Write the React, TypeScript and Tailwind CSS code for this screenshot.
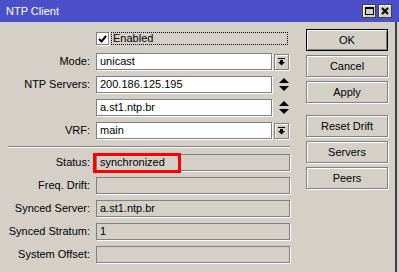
import type { ReactNode } from 'react';

function DropIcon() {
  return (
    <svg width="7" height="8" viewBox="0 0 7 8">
      <rect x="0" y="0" width="7" height="1" fill="#000" />
      <rect x="2" y="2" width="3" height="2" fill="#000" />
      <polygon points="0,4 7,4 3.5,7.5" fill="#000" />
    </svg>
  );
}

function SpinIcon() {
  return (
    <svg width="10" height="13" viewBox="0 0 10 13">
      <polygon points="0,5 10,5 5,0" fill="#000" />
      <polygon points="0,8 10,8 5,13" fill="#000" />
    </svg>
  );
}

function Row({ label, children }: { label: string; children: ReactNode }) {
  return (
    <div className="flex h-[17px] items-center gap-[6px]">
      <div className="w-[90px] text-right whitespace-nowrap">{label}</div>
      {children}
    </div>
  );
}

function Field({ value, width, disabled }: { value?: string; width: string; disabled?: boolean }) {
  return (
    <div
      className={`${width} h-[17px] border border-[#808080] shadow-[1px_1px_0_#fff] px-[3px] leading-[15px] whitespace-nowrap ${
        disabled ? 'bg-[#d4d0c8]' : 'bg-white'
      }`}
    >
      {value}
    </div>
  );
}

function Btn({ label, primary }: { label: string; primary?: boolean }) {
  return (
    <div
      className={`h-[22px] w-[82px] flex items-center justify-center ${
        primary
          ? 'border border-black shadow-[inset_1px_1px_0_#fff,inset_-1px_-1px_0_#808080]'
          : 'border border-[#808080] shadow-[1px_1px_0_#fff,inset_1px_1px_0_#fff]'
      }`}
    >
      {label}
    </div>
  );
}

export default function App() {
  return (
    <div className="w-[399px] h-[272px] bg-[#d4d0c8] flex flex-col overflow-hidden text-[11px] text-black font-['Liberation_Sans',Arial,sans-serif]">
      {/* title bar */}
      <div className="h-[22px] bg-[#4b50c8] flex items-center pl-[6px] pr-[7px]">
        <span className="text-white text-[11px]">NTP Client</span>
        <div className="ml-auto flex gap-[2px]">
          <div className="w-[14px] h-[14px] bg-[#d4d0c8] border border-[#404040] shadow-[inset_1px_1px_0_#fff] flex items-center justify-center">
            <div className="w-[9px] h-[8px] border border-black border-t-2" />
          </div>
          <div className="w-[14px] h-[14px] bg-[#d4d0c8] border border-[#404040] shadow-[inset_1px_1px_0_#fff] flex items-center justify-center">
            <svg width="8" height="8" viewBox="0 0 8 8">
              <path d="M1 1 L7 7 M7 1 L1 7" stroke="#000" strokeWidth="2" />
            </svg>
          </div>
        </div>
      </div>

      {/* body */}
      <div className="flex-1 w-[397px] border-r-2 border-[#404040] flex relative">
        <div className="w-[300px] flex flex-col pt-[10px]">
          <div className="flex h-[13px] items-center pl-[96px] gap-[2px]">
            <div className="w-[13px] h-[13px] bg-white border border-[#808080] shadow-[1px_1px_0_#fff] flex items-center justify-center">
              <svg width="9" height="8" viewBox="0 0 9 8">
                <path d="M1 4 L3.5 6.5 L8 1" stroke="#000" strokeWidth="2" fill="none" />
              </svg>
            </div>
            <div className="w-[177px] h-[13px] border border-dotted border-black leading-[11px] pl-[1px]">Enabled</div>
          </div>

          <div className="mt-[8px] flex flex-col gap-[6px]">
            <Row label="Mode:">
              <Field value="unicast" width="w-[176px]" />
              <div className="-ml-[4px] w-[15px] h-[16px] border border-[#808080] shadow-[1px_1px_0_#fff,inset_1px_1px_0_#fff] flex items-center justify-center">
                <DropIcon />
              </div>
            </Row>
            <Row label="NTP Servers:">
              <Field value="200.186.125.195" width="w-[176px]" />
              <div className="w-[11px] flex justify-center">
                <SpinIcon />
              </div>
            </Row>
            <Row label="">
              <Field value="a.st1.ntp.br" width="w-[176px]" />
              <div className="w-[11px] flex justify-center">
                <SpinIcon />
              </div>
            </Row>
            <Row label="VRF:">
              <Field value="main" width="w-[176px]" />
              <div className="-ml-[4px] w-[15px] h-[16px] border border-[#808080] shadow-[1px_1px_0_#fff,inset_1px_1px_0_#fff] flex items-center justify-center">
                <DropIcon />
              </div>
            </Row>
          </div>

          <div className="mt-[7px] ml-[8px] w-[282px] h-[2px] border-t border-[#808080] border-b border-b-white" />

          <div className="mt-[6px] flex flex-col gap-[6px]">
            <Row label="Status:">
              <Field value="synchronized" width="w-[194px]" disabled />
            </Row>
            <Row label="Freq. Drift:">
              <Field width="w-[194px]" disabled />
            </Row>
            <Row label="Synced Server:">
              <Field value="a.st1.ntp.br" width="w-[194px]" disabled />
            </Row>
            <Row label="Synced Stratum:">
              <Field value="1" width="w-[194px]" disabled />
            </Row>
            <Row label="System Offset:">
              <Field width="w-[194px]" disabled />
            </Row>
          </div>
        </div>

        <div className="ml-[6px] pt-[7px] flex flex-col gap-[4px]">
          <Btn label="OK" primary />
          <Btn label="Cancel" />
          <Btn label="Apply" />
          <div className="h-[4px]" />
          <Btn label="Reset Drift" />
          <Btn label="Servers" />
          <Btn label="Peers" />
        </div>

        {/* red highlight annotation */}
        <div className="absolute left-[93px] top-[131px] w-[88px] h-[20px] border-[3px] border-[#ff0000]" />
      </div>
    </div>
  );
}
